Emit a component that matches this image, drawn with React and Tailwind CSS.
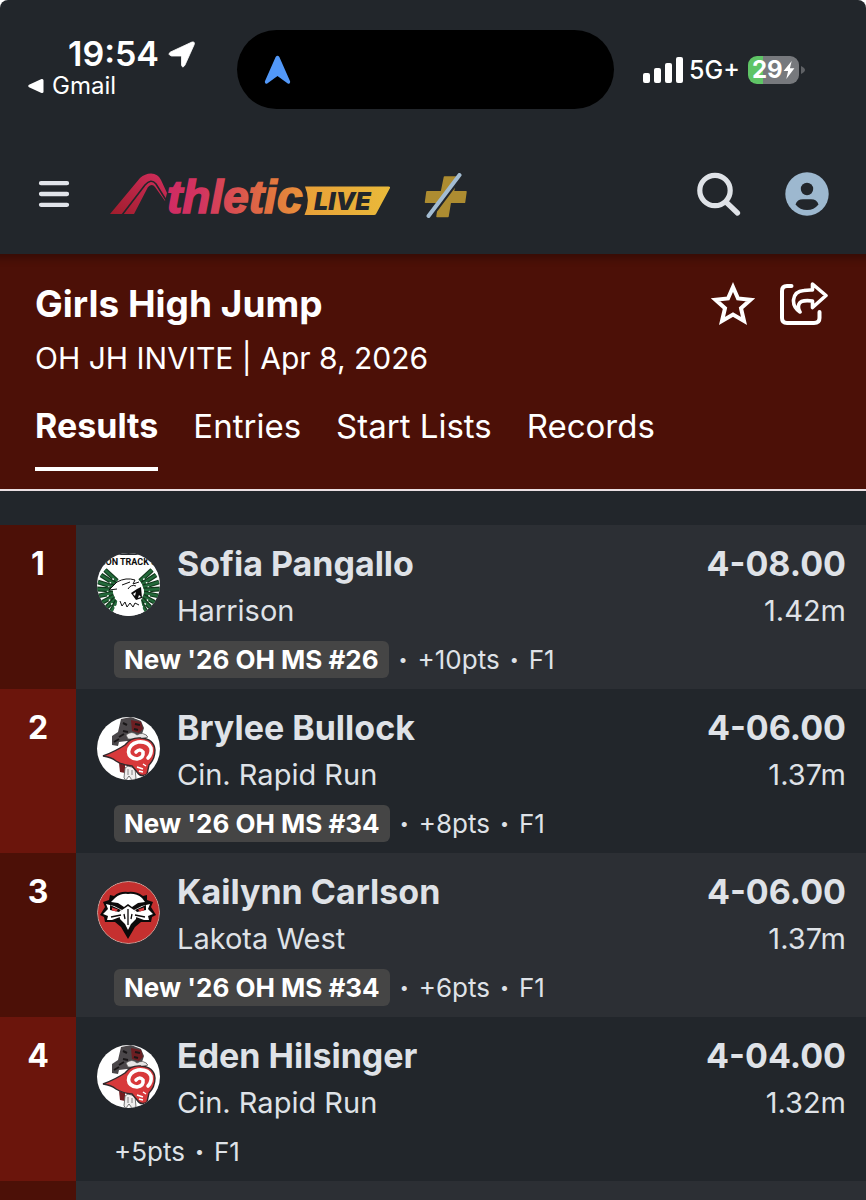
const rows = [
  { rank: 1, name: "Sofia Pangallo", team: "Harrison", mark: "4-08.00", metric: "1.42m", badge: "New '26 OH MS #26", pts: "+10pts", flight: "F1", logo: "wildcat" },
  { rank: 2, name: "Brylee Bullock", team: "Cin. Rapid Run", mark: "4-06.00", metric: "1.37m", badge: "New '26 OH MS #34", pts: "+8pts", flight: "F1", logo: "ram" },
  { rank: 3, name: "Kailynn Carlson", team: "Lakota West", mark: "4-06.00", metric: "1.37m", badge: "New '26 OH MS #34", pts: "+6pts", flight: "F1", logo: "firebird" },
  { rank: 4, name: "Eden Hilsinger", team: "Cin. Rapid Run", mark: "4-04.00", metric: "1.32m", badge: null, pts: "+5pts", flight: "F1", logo: "ram" },
];

const tabs = ["Results", "Entries", "Start Lists", "Records"];

const feathers = [
  [8, 17, 20, 28],
  [4, 22, 18, 31],
  [1, 29, 17, 34],
  [0, 36, 16, 37],
  [1, 43, 16, 40],
  [4, 50, 17, 43],
  [9, 55, 18, 46],
  [14, 59, 20, 48],
];

function WildcatLogo() {
  return (
    <svg viewBox="0 0 63 63" className="size-full" aria-hidden="true">
      <rect width="63" height="63" fill="#fff" />
      <rect width="63" height="2" fill="#2b2e33" />
      <text x="31.500" y="12" textAnchor="middle" fontFamily="Liberation Sans Narrow, Roboto, sans-serif" fontWeight="700" fontSize="9" fill="#0b0b0b">SON TRACK &amp;</text>
      {[false, true].map((mirrored) => (
        <g key={String(mirrored)} transform={mirrored ? "translate(63 0) scale(-1 1)" : undefined}>
          {feathers.map(([x1, y1, x2, y2]) => (
            <g key={y1}>
              <path d={`M${x1} ${y1} L${x2} ${y2}`} stroke="#12381c" strokeWidth="4.800" />
              <path d={`M${x1} ${y1} L${x2} ${y2}`} stroke="#23693a" strokeWidth="2.400" />
              <circle cx={(x1 + x2 * 2) / 3} cy={(y1 + y2 * 2) / 3 + 2} r="1" fill="#fff" />
            </g>
          ))}
        </g>
      ))}
      <path d="M12 37 L20 29 Q29 24 38 28 L44 32 Q46 40 44 47 L46 56 L50 63 H14 L18 54 Q22 50 19 38 Z" fill="#fff" />
      <path d="M12 37 L20 29 Q29 24 38 27 L36 31 L42 29 M12 37 L20 36 M25 32 L33 29 M31 36 Q34 31 39 33 M23 48 L25 53 L28 49 L30 54 L33 50 L36 54 L38 50 L42 52" fill="none" stroke="#111" strokeWidth="1" />
      <path d="M34 40 L40 36 L44 34 L45 45 L39 47 Z" fill="#0b0b0b" />
      <path d="M36 41 l2 2 1-4z M41 45 l1-3 2 2z" fill="#fff" />
    </svg>
  );
}

function RamLogo() {
  return (
    <svg viewBox="0 0 63 63" className="size-full" aria-hidden="true">
      <rect width="63" height="63" fill="#fff" />
      <path d="M24 2 L34 0 L44 4 L47 11 L45 17 L50 18 L49 23 L40 25 L30 24 L22 25 L21 29 L15 28 L15 19 L21 15 Z" fill="#4b474a" />
      <path d="M34 3 L44 5 L46 12 L42 16 L35 14 Z" fill="#6d1e22" />
      <path d="M38 7 l5 1 M37 12 l4 1 M26 6 l4 2 M22 20 l5-3 M17 25 l5-3 M26 14 l5 1" stroke="#191617" strokeWidth="2" />
      <path d="M29 18 Q35 13 40 18 Q46 14 51 20 L44 22 L31 22 Z" fill="#e7e5e5" stroke="#555" strokeWidth="0.700" />
      <path d="M22 46 L28 48 L28 56 L23 55 Z" fill="#741c20" />
      <path d="M28 51 L31 49 L38 51 L39 62 L35 63 L32 59 L29 63 L27 61 Z" fill="#f0eeee" stroke="#555" strokeWidth="0.800" />
      <path d="M31 52 v6 M35 53 v5" stroke="#666" strokeWidth="0.800" />
      <path d="M6 39 Q19 34 28 28 Q34 20 44 21 Q57 22 58 33 Q58 42 52 48 L50 57 Q44 61 40 55 L35 49 Q25 48 19 44 Q14 40 6 39 Z" fill="#d8393b" stroke="#34282b" strokeWidth="1.400" />
      <path d="M39 35 Q43 31 46 35 Q47 41 40 42 Q32 41 31.500 35 Q32 27 41 25 Q51 24 54 31 Q55 37 51 41" fill="none" stroke="#fff" strokeWidth="3.600" strokeLinecap="round" />
      <path d="M40 50 l6 2 M42 54 l4 1 M46 47 l3 2" stroke="#fff" strokeWidth="1.500" />
    </svg>
  );
}

function FirebirdLogo() {
  return (
    <svg viewBox="0 0 63 63" className="size-full" aria-hidden="true">
      <circle cx="31.500" cy="31.500" r="31" fill="#c5302f" stroke="#c9a79f" strokeWidth="1" />
      <path d="M31 11 Q39 10 46 15 L50 14 L50 19 L56 21 L54 26 L59 34 L55 36 L54 41 L44 41 L38 46 L31 58 L24 46 L18 41 L8 41 L7 36 L3 34 L8 26 L6 21 L12 19 L13 14 L17 15 Q23 10 31 11 Z" fill="#0c0a0a" />
      <path d="M31 13 Q39 12 45 17 L48 21 L41 22 L35 26 L31 23 L27 26 L21 22 L14 21 L18 17 Q24 12 31 13 Z" fill="#fff" />
      <path d="M9 23 L17 25 L25 29 L23 36 L15 39 L10 39 L11 35 L6 33 L11 28 Z M53 23 L45 25 L37 29 L39 36 L47 39 L52 39 L51 35 L56 33 L51 28 Z" fill="#fff" />
      <path d="M13 24 L24 29 L22 31 L13 29 Z M49 24 L38 29 L40 31 L49 29 Z" fill="#0c0a0a" />
      <path d="M15 26.500 l6 2 -2 2 -4-1z M47 26.500 l-6 2 2 2 4-1z" fill="#d8393b" />
      <path d="M31 25 L37 29 Q40 34 39 38 L34 43 L31 49 L28 43 L23 38 Q22 34 25 29 Z" fill="#fff" />
      <path d="M31 28 V44 M27 33 L28 38 M35 33 L34 38 M14 36 L24 34 M48 36 L38 34" stroke="#0c0a0a" strokeWidth="1.300" fill="none" />
    </svg>
  );
}

const logos = { wildcat: WildcatLogo, ram: RamLogo, firebird: FirebirdLogo };

function StatusBar() {
  return (
    <div className="flex h-[134px] pt-[30px]">
      <div className="w-[237px] shrink-0 pl-7">
        <div className="flex h-12 items-center gap-[9px] pl-10 text-[34px] font-semibold leading-[48px]">
          <span>19:54</span>
          <svg viewBox="0 0 27 27" className="size-[27px]" aria-hidden="true">
            <path d="M24 1 Q27.500 .5 26 4 L17 24 Q14.500 28 13.500 24 V15 H3.500 Q-1 13.500 2.500 11 Z" fill="#fff" stroke="#fff" strokeWidth="0.800" strokeLinejoin="round" />
          </svg>
        </div>
        <div className="flex h-4 items-center gap-2 text-2xl">
          <svg viewBox="0 0 16 16" className="size-4" aria-hidden="true">
            <path d="M13.500 1 Q15.500 .5 15.500 2.500 V13.500 Q15.500 15.500 13.500 15 L1 9.300 Q-.5 8 1 6.800 Z" fill="#fff" />
          </svg>
          <span>Gmail</span>
        </div>
      </div>
      <div className="flex h-[79px] flex-1 items-center rounded-full bg-black pl-[27px]">
        <svg viewBox="0 0 29 32" className="h-[30px] w-[27px]" aria-hidden="true">
          <path d="M12.500 2 Q14.500 -.5 16.500 2 L28 28 Q28.500 31.500 25.500 30.500 L14.500 22.500 L3.500 30.500 Q.5 31.500 1 28 Z" fill="#5298f8" />
        </svg>
      </div>
      <div className="flex h-20 w-[252px] shrink-0 items-center pl-[29px]">
        <svg viewBox="0 0 40 26" className="h-[26px] w-10" aria-hidden="true">
          <rect x="0" y="16" width="7" height="10" rx="2" fill="#fff" />
          <rect x="11" y="11" width="7" height="15" rx="2" fill="#fff" />
          <rect x="22" y="6" width="7" height="20" rx="2" fill="#fff" />
          <rect x="33" y="0" width="7" height="26" rx="2" fill="#fff" />
        </svg>
        <span className="ml-1.5 pt-0.5 text-[25px] font-medium">5G+</span>
        <div className="ml-2 flex h-7 w-[51px] items-center justify-center rounded-[9px] bg-linear-to-r from-[#5fc466] from-30% to-[#77797d] to-30% text-2xl font-bold">
          <span>29</span>
          <svg viewBox="0 0 12 20" className="h-[18px] w-3" aria-hidden="true">
            <path d="M9 0 L0 11 H5 L3 20 L12 8 H7 Z" fill="#fff" />
          </svg>
        </div>
        <svg viewBox="0 0 4 8" className="ml-0.5 h-2 w-1" aria-hidden="true">
          <path d="M0 0 Q4 2 4 4 Q4 6 0 8 Z" fill="#5f6165" />
        </svg>
      </div>
    </div>
  );
}

function BrandLogo() {
  return (
    <svg viewBox="0 -8 280 60" className="h-[60px] w-[280px]" role="img" aria-label="AthleticLIVE">
      <defs>
        <linearGradient id="mark" x1="0" y1="1" x2="1" y2="0">
          <stop offset="0" stopColor="#a01d2c" />
          <stop offset="1" stopColor="#d12d5c" />
        </linearGradient>
        <linearGradient id="word" gradientUnits="userSpaceOnUse" x1="57" y1="0" x2="195" y2="0">
          <stop offset="0" stopColor="#cf2b63" />
          <stop offset="0.250" stopColor="#d23560" />
          <stop offset="0.500" stopColor="#d95150" />
          <stop offset="0.750" stopColor="#e1743f" />
          <stop offset="1" stopColor="#e8943a" />
        </linearGradient>
        <linearGradient id="live" x1="0" x2="1">
          <stop offset="0" stopColor="#e8a038" />
          <stop offset="1" stopColor="#eaba3a" />
        </linearGradient>
      </defs>
      <path d="M0 42 L30 6 Q35 1.500 41 1.500 Q48 1.500 51 8 L57 21 L55 29 L45 15 Q42 11 38 15 L24 42 Z" fill="url(#mark)" />
      <path d="M12 43 L35 13 Q41 6 46 12 L56 28" fill="none" stroke="#22262b" strokeWidth="1.600" />
      <text x="57" y="41" fontFamily="Liberation Sans, Arial, sans-serif" fontWeight="700" fontStyle="italic" fontSize="46" fill="url(#word)" stroke="url(#word)" strokeWidth="1.600">thletic</text>
      <path d="M195 14.500 H278.500 Q280.500 14.500 280 16 L266 42 Q265.500 43 264 43 H194.500 Q201 29 195 14.500 Z" fill="url(#live)" />
      <text x="204" y="38" fontFamily="Inter, sans-serif" fontWeight="900" fontStyle="italic" fontSize="25" fill="#22262b">LIVE</text>
    </svg>
  );
}

function NavBar() {
  return (
    <nav className="flex h-[120px] items-center pl-[38px] pr-[37px]" aria-label="Main">
      <button type="button" aria-label="Open menu">
        <svg viewBox="0 0 32 28" className="h-7 w-8" fill="none" stroke="#e1e4ea" strokeWidth="4.300" strokeLinecap="round">
          <path d="M3 3.200 H29 M3 14 H29 M3 24.800 H29" />
        </svg>
      </button>
      <a href="#home" className="ml-10"><BrandLogo /></a>
      <a href="#plus" aria-label="Plus membership" className="ml-[34px] pt-1">
        <svg viewBox="0 0 44 46" className="h-[46px] w-11" fill="none">
          <path d="M20.500 4 H31.500 L29.500 18.700 H42 L40.500 29.300 H26.300 L24 43.500 H13 L15 29.300 H1.500 L3 18.700 H17.500 Z" fill="#ad8c31" stroke="#ad8c31" strokeWidth="1.500" strokeLinejoin="round" />
          <path d="M37.500 3.500 L7 44" stroke="#22262b" strokeWidth="3" />
          <path d="M35.500 2 L4.500 43" stroke="#a3bcd2" strokeWidth="4" strokeLinecap="round" />
        </svg>
      </a>
      <button type="button" aria-label="Search" className="ml-auto">
        <svg viewBox="0 0 44 44" className="size-11" fill="none" stroke="#dfe2e7" strokeLinecap="round">
          <circle cx="18" cy="18.500" r="15.200" strokeWidth="5.200" />
          <path d="M29 30 L40.500 41" strokeWidth="5.200" />
        </svg>
      </button>
      <button type="button" aria-label="Account" className="ml-11">
        <svg viewBox="0 0 44 44" className="size-11">
          <circle cx="22" cy="22" r="21.700" fill="#9db8cf" />
          <circle cx="22" cy="17" r="6.200" fill="#22262b" />
          <path d="M10.500 32.500 Q12 27.200 18 27.200 H26 Q32 27.200 33.500 32.500 Q29 38 22 38 Q15 38 10.500 32.500 Z" fill="#22262b" />
        </svg>
      </button>
    </nav>
  );
}

function EventHeader() {
  return (
    <section className="border-b-2 border-[#eadfe2] bg-[#4c1007] pb-[18px] pl-[35px] pr-[38px] pt-[26px] text-white shadow-[inset_0_14px_8px_-10px_rgba(0,0,0,0.3)]">
      <div className="flex items-center justify-between">
        <h1 className="text-[37px] font-bold leading-[48px]">Girls High Jump</h1>
        <div className="flex items-center gap-6">
          <button type="button" aria-label="Favorite">
            <svg viewBox="0 0 46 46" className="size-[46px]" fill="none" stroke="#fff" strokeWidth="4">
              <path d="M23 6 L28 17.500 L40.500 18.800 L31 27.200 L34 40 L23 33.500 L12 40 L15 27.200 L5.500 18.800 L18 17.500 Z" />
            </svg>
          </button>
          <button type="button" aria-label="Share">
            <svg viewBox="0 0 48 46" className="h-[46px] w-12" fill="none" stroke="#fff" strokeWidth="4" strokeLinecap="round" strokeLinejoin="round">
              <path d="M11.500 5 H7 Q2 5 2 10 V37 Q2 42 7 42 H34 Q39.500 42 39.500 37 V31" />
              <path d="M32.500 3 L46 14.500 L32.500 26.500 V20 Q21 18.500 19 23 Q17.500 27 20 31 Q13 26 13.500 19 Q14.500 10 24 9.500 Q28 8.800 32.500 9 Z" strokeWidth="3.600" />
            </svg>
          </button>
        </div>
      </div>
      <p className="mt-2 text-[30px] leading-[44px]">OH JH INVITE | Apr 8, 2026</p>
      <div role="tablist" className="mt-[22px] flex gap-[35px]">
        {tabs.map((tab, i) => (
          <button
            key={tab}
            type="button"
            role="tab"
            aria-selected={i === 0}
            className={`border-b-4 pb-[17px] leading-[48px] ${i === 0 ? "border-white text-[34px] font-bold" : "border-transparent text-[33px]"}`}
          >
            {tab}
          </button>
        ))}
      </div>
    </section>
  );
}

function ResultRow({ row }) {
  const Logo = logos[row.logo];
  return (
    <li className="flex h-[164px] bg-[#22262b] odd:bg-[#2c2f34]">
      <div className={`w-[76px] shrink-0 pt-4 text-center text-[32px] font-bold leading-[46px] text-white ${row.rank % 2 ? "bg-[#4c1007]" : "bg-[#6b150c]"}`}>
        {row.rank}
      </div>
      <div className="flex-1 pl-[21px] pr-5 pt-4">
        <div className="flex">
          <div className="mt-3 size-[63px] overflow-hidden rounded-full"><Logo /></div>
          <div className="ml-[17px] flex-1">
            <h2 className="text-[34px] font-bold leading-[46px]">{row.name}</h2>
            <p className="text-[29px] leading-[48px]">{row.team}</p>
          </div>
          <div className="text-right">
            <p className="text-[34px] font-bold leading-[46px]">{row.mark}</p>
            <p className="text-[29px] leading-[48px]">{row.metric}</p>
          </div>
        </div>
        <div className="flex h-12 items-center gap-2.5 pl-[17px] text-[26px]">
          {row.badge && (
            <>
              <span className="rounded-md bg-[#454545] px-[10px] font-bold leading-[37px] text-white">{row.badge}</span>
              <span className="text-base">•</span>
            </>
          )}
          <span>{row.pts}</span>
          <span className="text-base">•</span>
          <span>{row.flight}</span>
        </div>
      </div>
    </li>
  );
}

export default function App() {
  return (
    <div className="flex min-h-screen flex-col overflow-hidden rounded-t-lg bg-[#22262b] font-['Inter',sans-serif] text-[#dfe2e7]">
      <header className="text-white">
        <StatusBar />
        <NavBar />
      </header>
      <main className="flex flex-1 flex-col">
        <EventHeader />
        <ol className="mt-[34px]">
          {rows.map((row) => <ResultRow key={row.rank} row={row} />)}
        </ol>
        <div className="flex flex-1 bg-[#2c2f34]">
          <div className="w-[76px] bg-[#4c1007]" />
        </div>
      </main>
    </div>
  );
}
